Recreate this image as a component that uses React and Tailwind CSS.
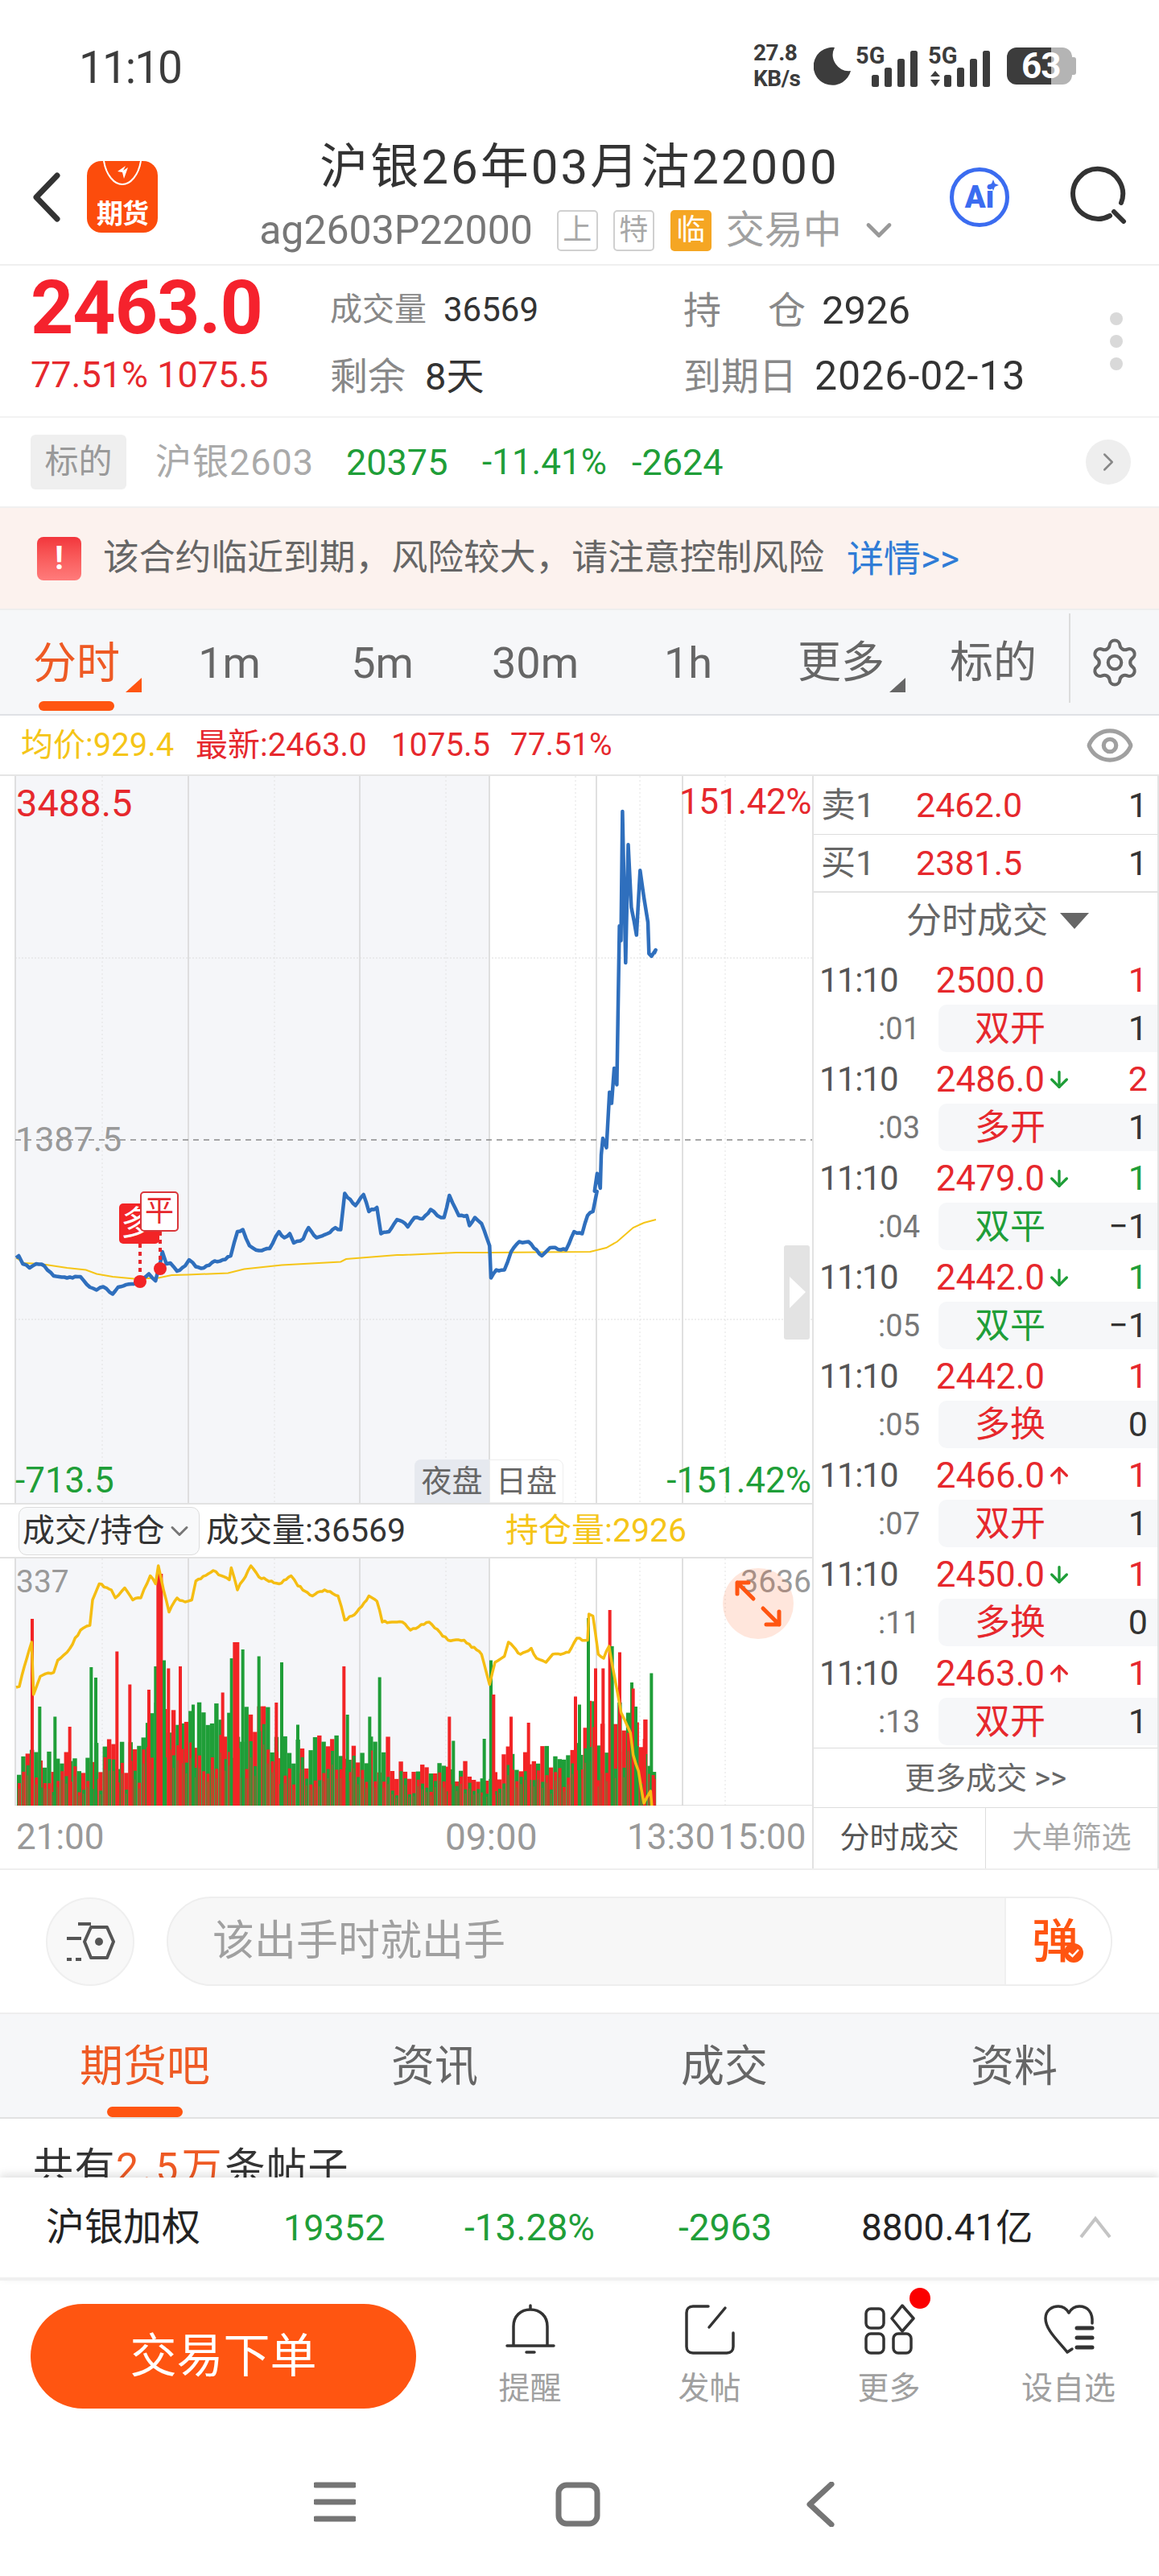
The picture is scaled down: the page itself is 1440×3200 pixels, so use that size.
import React from 'react';
import { ArrowDown, ArrowUp, ChevronRight, ChevronDown, Settings, Eye } from 'lucide-react';

const RED = '#e6282d';
const GREEN = '#1f9e38';
const YELLOW = '#f5c518';

// chart traces were read off the zoomed crops, so they are kept in crop coordinates
const fromLeft = (pts) => pts.map(([x, y]) => [x / 3, 1480 + y / 2]);
const fromRight = (pts) => pts.map(([x, y]) => [x / 3 + 500, 1480 + y / 2]);
const fromTop = (pts) => pts.map(([x, y]) => [x * 0.644, 760 + y * 0.459]);

const makeRand = (seed) => () => {
  seed = (seed * 16807) % 2147483647;
  return seed / 2147483647;
};

const roughen = (pts, amount, seed) => {
  const rand = makeRand(seed);
  const out = [];
  pts.forEach((p, i) => {
    out.push(p);
    const next = pts[i + 1];
    if (!next) return;
    const steps = Math.floor(Math.abs(next[0] - p[0]) / 3);
    for (let s = 1; s < steps; s++) {
      const t = s / steps;
      out.push([p[0] + (next[0] - p[0]) * t, p[1] + (next[1] - p[1]) * t + (rand() - 0.5) * amount]);
    }
  });
  return out;
};

const toPoints = (pts) => pts.map(([x, y]) => `${x.toFixed(1)},${y.toFixed(1)}`).join(' ');

const priceLine = roughen(
  [
    ...fromLeft([[60,165],[70,160],[85,180],[110,190],[135,180],[165,185],[200,210],[250,215],[300,212],[335,238],[360,245],[385,237],[420,255],[440,238],[490,230],[520,225],[555,205],[580,222],[600,170],[605,150],[620,180],[635,178],[660,198],[690,185],[705,170],[730,187],[760,190],[790,177],[830,170],[860,160],[885,100],[905,95],[930,135],[965,147],[1005,142],[1040,100],[1060,115],[1080,105],[1095,128],[1130,118],[1150,90],[1180,115],[1220,105],[1250,90],[1270,95],[1285,5],[1325,35],[1355,8],[1375,50],[1405,40],[1420,105],[1450,100],[1480,70]]),
    ...fromRight([[0,75],[20,88],[45,65],[75,68],[105,45],[130,60],[155,65],[175,10],[210,60],[240,60],[250,85],[270,65],[295,80],[325,135],[330,215],[350,195],[380,195],[405,150],[435,125],[470,125],[520,160],[550,140],[610,145],[640,100],[670,105],[690,60],[710,50],[725,0]]),
    ...fromTop([[1147,1568],[1152,1520],[1158,1560],[1160,1470],[1163,1425],[1170,1450],[1176,1300],[1180,1330],[1185,1235],[1190,1280],[1195,850],[1198,890],[1201,540],[1207,950],[1212,630],[1218,800],[1228,875],[1235,700],[1242,770],[1250,840],[1252,925],[1257,932],[1265,915],[1262,925]]),
  ],
  2.5,
  11
);

const avgLine = [
  ...fromLeft([[60,165],[90,178],[150,180],[250,190],[320,195],[360,205],[420,212],[500,217],[590,215],[640,208],[700,207],[850,203],[910,193],[1050,183],[1270,175],[1290,168],[1480,158]]),
  ...fromRight([[0,158],[200,152],[330,152],[700,150],[760,140],[800,125],[860,90],[900,78],[945,70]]),
];

const holdLine = roughen(
  [
    ...fromLeft([[60,1232],[72,1230],[100,1160],[118,1120],[125,1250],[150,1205],[200,1195],[215,1165],[250,1145],[300,1090],[335,1078],[345,1015],[370,975],[415,990],[430,1010],[465,985],[495,1015],[525,1010],[560,955],[580,975],[590,930],[600,960],[630,1045],[660,1010],[690,1020],[715,1015],[730,968],[795,942],[855,965],[862,935],[885,990],[935,930],[965,958],[1040,975],[1085,955],[1110,980],[1165,1005],[1210,990],[1260,1005],[1285,1065],[1330,1045],[1375,1005],[1405,1018],[1425,1070],[1480,1070]]),
    ...fromRight([[0,1070],[30,1090],[100,1070],[170,1115],[230,1115],[295,1150],[325,1225],[345,1170],[380,1155],[395,1120],[440,1150],[480,1135],[500,1160],[535,1170],[560,1150],[620,1145],[650,1110],[690,1115],[695,1050],[710,1055],[730,1150],[750,1160],[770,1130],[800,1240],[815,1295],[850,1345],[860,1400],[880,1440],[900,1520],[925,1490],[930,1530],[945,1530]]),
  ],
  3,
  23
);

const VOL_BOTTOM = 2243;

const volumeEnvelope = (x) => {
  if (x < 160) return 85;
  if (x < 340) return 130;
  if (x < 480) return 90;
  if (x < 620) return 65;
  if (x < 720) return 80;
  if (x < 800) return 135;
  return 60;
};

const baseBars = (() => {
  const rand = makeRand(97);
  const bars = [];
  for (let i = 0; i < 150; i++) {
    const x = 21 + i * 5.33;
    if (x > 815) break;
    const env = volumeEnvelope(x);
    const tall = env * (0.45 + rand() * 0.55);
    const short = tall * (0.35 + rand() * 0.5);
    const redFirst = rand() > 0.55;
    bars.push({ x, h: tall, w: 5.4, color: redFirst ? '#f22426' : '#1f9e38' });
    bars.push({ x: x + 1, h: short, w: 4, color: redFirst ? '#1f9e38' : '#f22426' });
    bars.push({ x: x + 2, h: short * 0.75, w: 1.5, color: '#8a6a30' });
  }
  return bars;
})();

// the tall bars that stand out, [crop x, crop y of top, colour, width]
const peaks = [
  ...fromLeft([[120,1062],[148,1280],[205,1305],[260,1330],[340,1182],[357,1208],[436,1143],[484,1225],[555,1238],[580,1180],[595,950],[612,1165],[628,1185],[672,1180],[720,1275],[830,1245],[863,1160],[880,1120],[905,1138],[965,1155],[1030,1270],[1050,1170],[1110,1325],[1282,1180],[1295,1300],[1378,1305],[1415,1207]]).map((p, i) => [
    ...p,
    [0,3,6,7,8,10,12,13,15,17,20,23].includes(i) ? '#f22426' : '#1f9e38',
    i === 10 || i === 17 ? 8 : 4,
  ]),
  ...fromRight([[175,1305],[190,1365],[305,1360],[330,1165],[340,1250],[405,1305],[470,1320],[645,1255],[660,1275],[693,1060],[720,1185],[748,1185],[773,1040],[782,1130],[810,1145],[855,1220],[860,1235],[870,1280],[902,1360],[928,1197],[935,1450]]).map((p, i) => [
    ...p,
    [0,4,5,6,7,10,11,12,14,16,18,20].includes(i) ? '#f22426' : '#1f9e38',
    4,
  ]),
];

const solidX = [19, 234, 447, 608, 741, 848];
const dottedX = [127, 341, 554, 715, 795, 901];

const Grid = ({ top, bottom }) => (
  <>
    <rect x="19" y={top} width="589" height={bottom - top} fill="#f5f6f9" />
    {dottedX.map((x) => (
      <line key={x} x1={x} x2={x} y1={top} y2={bottom} stroke="#e2e2e2" strokeWidth="1" strokeDasharray="2 3" />
    ))}
    {solidX.map((x) => (
      <line key={x} x1={x} x2={x} y1={top} y2={bottom} stroke="#d6d6d6" strokeWidth="1.5" />
    ))}
  </>
);

const PriceChart = () => (
  <svg className="absolute inset-0" width="1009" height="903" viewBox="0 964 1009 903">
    <Grid top={964} bottom={1867} />
    <line x1="19" x2="1009" y1="1190" y2="1190" stroke="#dedede" strokeDasharray="2 2" />
    <line x1="19" x2="1009" y1="1639" y2="1639" stroke="#dedede" strokeDasharray="2 2" />
    <line x1="19" x2="1009" y1="1416" y2="1416" stroke="#8a8a8a" strokeWidth="1.5" strokeDasharray="7 6" />
    <polyline points={toPoints(avgLine)} fill="none" stroke={YELLOW} strokeWidth="2" />
    <polyline points={toPoints(priceLine)} fill="none" stroke="#2f6fbd" strokeWidth="4.5" strokeLinejoin="round" />
    <line x1="174" x2="174" y1="1545" y2="1590" stroke="#e6282d" strokeWidth="4" strokeDasharray="5 5" />
    <line x1="199" x2="199" y1="1530" y2="1574" stroke="#e6282d" strokeWidth="4" strokeDasharray="5 5" />
    <circle cx="174" cy="1592" r="8" fill="#f22426" />
    <circle cx="199" cy="1576" r="8" fill="#f22426" />
    <rect x="974" y="1547" width="32" height="117" rx="3" fill="#e3e3e3" />
    <path d="M981 1586 L1001 1605 L981 1625 Z" fill="#fff" />
  </svg>
);

const VolumeChart = () => (
  <svg className="absolute inset-0" width="1009" height="307" viewBox="0 1936 1009 307">
    <Grid top={1936} bottom={VOL_BOTTOM} />
    <line x1="19" x2="1009" y1="2243" y2="2243" stroke="#d6d6d6" strokeWidth="1.5" />
    {baseBars.map((b, i) => (
      <rect key={i} x={b.x} y={VOL_BOTTOM - b.h} width={b.w} height={b.h} fill={b.color} />
    ))}
    {peaks.map(([x, y, color, w], i) => (
      <rect key={i} x={x - w / 2} y={y} width={w} height={VOL_BOTTOM - y} fill={color} />
    ))}
    <polyline points={toPoints(holdLine)} fill="none" stroke="#f5bd12" strokeWidth="3.5" strokeLinejoin="round" />
  </svg>
);

const StatusBar = () => (
  <div className="flex h-[164px] items-center text-[#3c3c3c]">
    <div className="ml-[98px] mt-[4px] w-[838px] text-[55px] leading-none tracking-[-2px]">11:10</div>
    <div className="flex w-[60px] flex-col text-[28px] font-bold leading-[32px] tracking-[-0.5px]">
      <span>27.8</span>
      <span>KB/s</span>
    </div>
    <svg className="ml-[15px]" width="46" height="48" viewBox="0 0 46 48">
      <path d="M26 1 A23.500 23.500 0 1 0 46 30 A20 20 0 0 1 26 1 Z" fill="#3c3c3c" />
    </svg>
    <div className="relative ml-[6px] h-[52px] w-[78px]">
      <span className="absolute left-0 top-[-1px] text-[29px] font-bold leading-none">5G</span>
      <svg className="absolute left-0 top-0" width="78" height="52" viewBox="0 0 78 52">
        <rect x="20" y="37" width="9" height="15" rx="2.500" fill="#3c3c3c" />
        <rect x="36" y="28" width="9" height="24" rx="2.500" fill="#3c3c3c" />
        <rect x="52" y="17" width="9" height="35" rx="2.500" fill="#3c3c3c" />
        <rect x="68" y="7" width="9" height="45" rx="2.500" fill="#3c3c3c" />
      </svg>
    </div>
    <div className="relative ml-[12px] h-[52px] w-[78px]">
      <span className="absolute left-0 top-[-1px] text-[29px] font-bold leading-none">5G</span>
      <svg className="absolute left-0 top-0" width="78" height="52" viewBox="0 0 78 52">
        <path d="M3 39 L9 32 L15 39 Z M3 43 L9 51 L15 43 Z" fill="#3c3c3c" />
        <rect x="20" y="37" width="9" height="15" rx="2.500" fill="#3c3c3c" />
        <rect x="36" y="28" width="9" height="24" rx="2.500" fill="#3c3c3c" />
        <rect x="52" y="17" width="9" height="35" rx="2.500" fill="#3c3c3c" />
        <rect x="68" y="7" width="9" height="45" rx="2.500" fill="#3c3c3c" />
      </svg>
    </div>
    <div className="relative ml-[20px] flex h-[46px] w-[86px] items-center">
      <div className="h-full w-[55px] rounded-l-[12px] bg-[#3c3c3c]" />
      <div className="h-full w-[26px] rounded-r-[12px] bg-[#b4b4b4]" />
      <div className="h-[22px] w-[5px] rounded-r-[3px] bg-[#b4b4b4]" />
      <span className="absolute left-[18px] top-[3px] text-[44px] font-bold leading-[40px] tracking-[-1px] text-white">63</span>
    </div>
  </div>
);

const SmallTag = ({ children }) => (
  <span className="flex h-[51px] w-[51px] items-center justify-center rounded-[5px] border-2 border-[#d0d0d0] text-[36px] leading-none text-[#a8a8a8]">
    {children}
  </span>
);

const Header = () => (
  <div className="flex h-[166px] border-b-2 border-[#efefef]">
    <div className="mt-[36px] flex h-[89px] w-[260px] items-center self-start pl-[39px]">
      <svg width="38" height="64" viewBox="0 0 38 64">
        <path d="M32 5 L6 32 L32 59" fill="none" stroke="#333" strokeWidth="7" strokeLinecap="round" strokeLinejoin="round" />
      </svg>
      <div className="relative ml-[31px] flex h-[89px] w-[88px] items-end justify-center overflow-hidden rounded-[18px] bg-[#fc4c0c] pb-[7px]">
        <svg className="absolute left-[18px] top-0" width="52" height="32" viewBox="0 0 52 32">
          <path d="M3 0 C6 18 16 29 26 29 C36 29 46 18 49 0" fill="none" stroke="#fff" strokeWidth="2" />
          <path d="M20 13 L30 6 L27 12 L33 8 L28 22 L26 14 Z" fill="#fff" />
        </svg>
        <span className="text-[33px] font-bold leading-none tracking-[-1px] text-white">期货</span>
      </div>
    </div>
    <div className="flex flex-1 flex-col items-center pt-[15px]">
      <div className="text-[60px] leading-[58px] tracking-[3px] text-[#333]">沪银26年03月沽22000</div>
      <div className="mt-[23px] flex h-[52px] items-center">
        <span className="text-[50px] leading-none text-[#777]">ag2603P22000</span>
        <span className="ml-[30px]"><SmallTag>上</SmallTag></span>
        <span className="ml-[19px]"><SmallTag>特</SmallTag></span>
        <span className="ml-[20px] flex h-[51px] w-[51px] items-center justify-center rounded-[5px] bg-[#f5a623] text-[36px] leading-none text-white">临</span>
        <span className="ml-[18px] text-[48px] leading-none text-[#a0a0a0]">交易中</span>
        <ChevronDown className="ml-[20px]" size={52} color="#999" strokeWidth={2.2} />
      </div>
    </div>
    <div className="mt-[44px] flex h-[76px] w-[260px] items-start self-start">
      <div className="relative flex h-[74px] w-[74px] items-center justify-center rounded-full border-[5px] border-[#3b6cf0]">
        <span className="text-[38px] font-black leading-none text-[#3b6cf0]">Ai</span>
        <svg className="absolute left-[42px] top-[10px]" width="14" height="14" viewBox="0 0 14 14">
          <path d="M7 0 L9 5 L14 7 L9 9 L7 14 L5 9 L0 7 L5 5 Z" fill="#3b6cf0" />
        </svg>
      </div>
      <svg className="ml-[75px] mt-[-2px]" width="72" height="72" viewBox="0 0 72 72">
        <path d="M50 62 A31 31 0 1 1 64 46" fill="none" stroke="#333" strokeWidth="6" strokeLinecap="round" />
        <path d="M55 57 L67 69" fill="none" stroke="#333" strokeWidth="6" strokeLinecap="round" />
      </svg>
    </div>
  </div>
);

const Quote = () => (
  <div className="flex h-[189px] border-b-2 border-[#f2f2f2] pt-[12px]">
    <div className="flex w-[410px] flex-col pl-[38px]">
      <div className="flex h-[80px] items-center text-[93px] font-bold leading-none tracking-[-1px] text-[#f5222d]">2463.0</div>
      <div className="flex h-[86px] items-center text-[45px] leading-none text-[#e6282d]">77.51% 1075.5</div>
    </div>
    <div className="flex w-[439px] flex-col pt-[2px]">
      <div className="flex h-[82px] items-center leading-none">
        <span className="text-[40px] text-[#888]">成交量</span>
        <span className="ml-[21px] text-[42px] text-[#333]">36569</span>
      </div>
      <div className="flex h-[82px] items-center leading-none">
        <span className="text-[47px] text-[#888]">剩余</span>
        <span className="ml-[24px] text-[47px] text-[#333]">8天</span>
      </div>
    </div>
    <div className="flex w-[530px] flex-col pt-[2px]">
      <div className="flex h-[82px] items-center leading-none">
        <span className="w-[105px] text-[47px] text-[#888]">持</span>
        <span className="w-[67px] text-[47px] text-[#888]">仓</span>
        <span className="text-[49px] text-[#333]">2926</span>
      </div>
      <div className="flex h-[82px] items-center leading-none">
        <span className="w-[163px] text-[47px] text-[#888]">到期日</span>
        <span className="text-[50px] tracking-[1px] text-[#333]">2026-02-13</span>
      </div>
    </div>
    <div className="-mt-[12px] flex flex-col justify-center gap-[12px]">
      <div className="h-[16px] w-[16px] rounded-full bg-[#d9d9d9]" />
      <div className="h-[16px] w-[16px] rounded-full bg-[#d9d9d9]" />
      <div className="h-[16px] w-[16px] rounded-full bg-[#d9d9d9]" />
    </div>
  </div>
);

const Underlying = () => (
  <div className="flex h-[112px] items-center border-b-2 border-[#f0f0f0] pl-[38px] text-[45px] leading-none">
    <span className="flex h-[68px] w-[119px] items-center justify-center rounded-[6px] bg-[#efefef] text-[42px] text-[#999]">标的</span>
    <span className="ml-[36px] w-[237px] tracking-[1px] text-[#aaa]">沪银2603</span>
    <span className="w-[169px] text-[#1f9e38]">20375</span>
    <span className="w-[186px] text-[44px] text-[#1f9e38]">-11.41%</span>
    <span className="text-[#1f9e38]">-2624</span>
    <span className="ml-auto mr-[35px] flex h-[56px] w-[56px] items-center justify-center rounded-full bg-[#eeeeee]">
      <ChevronRight size={38} color="#888" strokeWidth={1.6} />
    </span>
  </div>
);

const Warning = () => (
  <div className="flex h-[127px] items-center border-b-2 border-[#eeeeee] bg-[#fcf2ee] pl-[46px]">
    <span className="flex h-[54px] w-[55px] items-center justify-center rounded-[8px] bg-gradient-to-b from-[#f2353c] to-[#ff7b7b] text-[40px] font-bold leading-none text-white">!</span>
    <span className="ml-[27px] text-[44.800px] leading-none text-[#666]">该合约临近到期，风险较大，请注意控制风险</span>
    <span className="ml-[28px] text-[46px] leading-none text-[#2f7cd6]">详情&gt;&gt;</span>
  </div>
);

const Corner = ({ color }) => (
  <svg className="absolute bottom-[27px]" width="20" height="18" viewBox="0 0 20 18">
    <path d="M0 18 L20 0 L20 18 Z" fill={color} />
  </svg>
);

const PeriodTabs = () => (
  <div className="flex h-[131px] border-b-2 border-[#dfe1e5] bg-[#f6f7f9] text-[54px] leading-none text-[#666]">
    <div className="relative flex w-[190px] items-center justify-center pt-[4px] text-[#ee5a24]">
      分时
      <span className="absolute left-[156px] top-0 h-full"><Corner color="#ff5511" /></span>
      <span className="absolute bottom-[4px] left-[48px] h-[12px] w-[94px] rounded-full bg-[#ff5511]" />
    </div>
    <div className="flex w-[190px] items-center justify-center pt-[2px]">1m</div>
    <div className="flex w-[190px] items-center justify-center pt-[2px]">5m</div>
    <div className="flex w-[190px] items-center justify-center pt-[2px]">30m</div>
    <div className="flex w-[190px] items-center justify-center pt-[2px]">1h</div>
    <div className="relative flex w-[190px] items-center justify-center pt-[2px]">
      更多
      <span className="absolute left-[155px] top-0 h-full"><Corner color="#666" /></span>
    </div>
    <div className="flex w-[188px] items-center justify-center pt-[2px]">标的</div>
    <div className="mb-[14px] mt-[4px] border-l-2 border-[#dcdcdc]" />
    <div className="flex flex-1 items-center justify-center">
      <Settings size={66} color="#666" strokeWidth={1.5} />
    </div>
  </div>
);

const InfoRow = () => (
  <div className="flex h-[75px] items-center border-b-2 border-[#e5e5e5] pl-[26px] text-[40px] leading-none">
    <span className="w-[217px] text-[#f5c518]">均价:929.4</span>
    <span className="w-[243px] text-[#e6282d]">最新:2463.0</span>
    <span className="w-[148px] text-[#e6282d]">1075.5</span>
    <span className="text-[39px] text-[#e6282d]">77.51%</span>
    <Eye className="ml-auto mr-[30px]" size={62} color="#a0a0a0" strokeWidth={2} />
  </div>
);

const trades = [
  ['2500.0', '', RED, '1', ':01', '双开', RED, '1'],
  ['2486.0', 'down', RED, '2', ':03', '多开', RED, '1'],
  ['2479.0', 'down', GREEN, '1', ':04', '双平', GREEN, '−1'],
  ['2442.0', 'down', GREEN, '1', ':05', '双平', GREEN, '−1'],
  ['2442.0', '', RED, '1', ':05', '多换', RED, '0'],
  ['2466.0', 'up', RED, '1', ':07', '双开', RED, '1'],
  ['2450.0', 'down', RED, '1', ':11', '多换', RED, '0'],
  ['2463.0', 'up', RED, '1', ':13', '双开', RED, '1'],
];

const TradeRow = ({ trade }) => {
  const [price, dir, qtyColor, qty, sec, label, labelColor, change] = trade;
  return (
    <div className="h-[123px] pl-[7px]">
      <div className="flex h-[61px] items-center leading-none">
        <span className="w-[102px] text-[42px] tracking-[-1.500px] text-[#555]">11:10</span>
        <span className="w-[178px] text-right text-[44px] text-[#e6282d]">{price}</span>
        <span className="ml-[1px] flex w-[33px] justify-center">
          {dir === 'down' && <ArrowDown size={32} color="#1f9e38" strokeWidth={2.5} />}
          {dir === 'up' && <ArrowUp size={32} color="#e6282d" strokeWidth={2.5} />}
        </span>
        <span className="flex-1 pr-[12px] text-right" style={{ color: qtyColor }}>{qty}</span>
      </div>
      <div className="flex h-[59px] items-center leading-none">
        <span className="w-[125px] text-right text-[38px] text-[#777]">{sec}</span>
        <div className="ml-[23px] flex h-[59px] flex-1 items-center rounded-l-[10px] bg-[#f6f7f9]">
          <span className="w-[178px] text-center text-[44px]" style={{ color: labelColor }}>{label}</span>
          <span className="flex-1 pr-[12px] text-right text-[#333]">{change}</span>
        </div>
      </div>
    </div>
  );
};

const SidePanel = () => (
  <div className="flex w-[431px] flex-col border-x-2 border-[#e2e2e2] text-[43px] leading-none">
    <div className="flex h-[73px] items-center border-b border-[#dddddd] pl-[9px]">
      <span className="w-[118px] text-[#666]">卖1</span>
      <span className="w-[200px] text-[#e6282d]">2462.0</span>
      <span className="flex-1 pr-[12px] text-right text-[#333]">1</span>
    </div>
    <div className="flex h-[72px] items-center border-b-2 border-[#e2e2e2] pl-[9px]">
      <span className="w-[118px] text-[#666]">买1</span>
      <span className="w-[200px] text-[#e6282d]">2381.5</span>
      <span className="flex-1 pr-[12px] text-right text-[#333]">1</span>
    </div>
    <div className="flex h-[78px] items-center justify-center pb-[8px] pl-[30px] text-[44px] text-[#666]">
      分时成交
      <svg className="ml-[15px]" width="36" height="20" viewBox="0 0 36 20">
        <path d="M0 0 H36 L18 20 Z" fill="#666" />
      </svg>
    </div>
    {trades.map((t, i) => <TradeRow key={i} trade={t} />)}
    <div className="flex h-[74px] items-center justify-center border-t border-[#dddddd] text-[38px] text-[#666]">更多成交 &gt;&gt;</div>
    <div className="flex h-[76px] border-t border-[#dddddd] text-[37px]">
      <div className="flex w-[214px] items-center justify-center border-r border-[#dddddd] text-[#555]">分时成交</div>
      <div className="flex flex-1 items-center justify-center text-[#a8a8a8]">大单筛选</div>
    </div>
  </div>
);

const ChartColumn = () => (
  <div className="flex w-[1009px] flex-col">
    <div className="relative h-[903px] text-[44px] leading-none">
      <PriceChart />
      <span className="absolute left-[20px] top-[10px] text-[47px] text-[#e6282d]">3488.5</span>
      <span className="absolute right-[1px] top-[10px] tracking-[-0.5px] text-[#e6282d]">151.42%</span>
      <span className="absolute left-[19px] top-[430px] text-[43px] text-[#999]">1387.5</span>
      <span className="absolute bottom-[6px] left-[19px] text-[#1f9e38]">-713.5</span>
      <span className="absolute bottom-[6px] right-[1px] text-[#1f9e38]">-151.42%</span>
      <div className="absolute left-[148px] top-[531px] flex h-[50px] w-[50px] items-center overflow-hidden rounded-[5px] bg-[#f22426] pl-[2px] text-[42px] text-white">多</div>
      <div className="absolute left-[174px] top-[516px] flex h-[50px] w-[48px] items-center justify-center rounded-[5px] border-2 border-[#d9363a] bg-white text-[36px] text-[#e6282d]">平</div>
      <div className="absolute bottom-0 left-[515px] flex h-[54px] w-[185px] text-[38px] text-[#666]">
        <span className="flex w-[93px] items-center justify-center rounded-tl-[8px] bg-[#e6e9ef]">夜盘</span>
        <span className="flex w-[92px] items-center justify-center rounded-tr-[8px] border border-[#eeeeee] bg-white">日盘</span>
      </div>
    </div>
    <div className="flex h-[69px] items-center border-y-2 border-[#e2e2e2] pl-[23px] text-[40px] leading-none">
      <div className="flex h-[60px] w-[225px] items-center rounded-[10px] border border-[#dcdcdc] bg-[#f8f9fa] pl-[4px] text-[#333]">
        成交/持仓
        <ChevronDown size={36} color="#777" strokeWidth={2} />
      </div>
      <span className="ml-[8px] w-[372px] text-[41px] text-[#333]">成交量:36569</span>
      <span className="text-[41px] text-[#f5c518]">持仓量:2926</span>
    </div>
    <div className="relative h-[307px] text-[39px] leading-none">
      <VolumeChart />
      <span className="absolute left-[20px] top-[10px] text-[#999]">337</span>
      <span className="absolute right-[1px] top-[10px] text-[#999]">3636</span>
      <div className="absolute left-[898px] top-[12px] flex h-[88px] w-[88px] items-center justify-center rounded-full bg-[#ff5511]/15">
        <svg width="60" height="60" viewBox="0 0 60 60">
          <path d="M4 18 V4 H18 M4 4 L24 24 M36 36 L56 56 M56 40 V56 H40" fill="none" stroke="#ff5511" strokeWidth="5" strokeLinecap="round" strokeLinejoin="round" />
        </svg>
      </div>
    </div>
    <div className="flex h-[77px] items-center pl-[20px] text-[44px] leading-none text-[#999]">
      <span className="w-[533px]">21:00</span>
      <span className="w-[226px] text-[46px]">09:00</span>
      <span className="w-[113px]">13:30</span>
      <span>15:00</span>
    </div>
  </div>
);

const InputRow = () => (
  <div className="flex h-[181px] items-center border-y-2 border-[#eeeeee] pl-[57px]">
    <div className="flex h-[110px] w-[110px] items-center justify-center rounded-full border-2 border-[#efefef] bg-[#f8f8f8]">
      <svg width="62" height="54" viewBox="0 0 62 54">
        <path d="M16 5 H32 M2 23 H20 M2 49 H8 M13 49 H20" fill="none" stroke="#555" strokeWidth="4" />
        <path d="M32 9 H52 L60 27 L52 47 H32 L24 27 Z" fill="none" stroke="#555" strokeWidth="4" strokeLinejoin="round" />
        <circle cx="42" cy="27" r="5" fill="#555" />
      </svg>
    </div>
    <div className="ml-[40px] flex h-[111px] w-[1175px] items-center overflow-hidden rounded-full border-2 border-[#eeeeee] bg-[#f7f7f7] pl-[55px]">
      <span className="flex-1 text-[52px] leading-none text-[#a0a0a0]">该出手时就出手</span>
      <div className="relative flex h-full w-[132px] items-center border-l-2 border-[#f0f0f0] bg-white pl-[32px]">
        <span className="text-[58px] font-medium leading-none text-[#ff5511]">弹</span>
        <svg className="absolute left-[72px] top-[56px]" width="24" height="24" viewBox="0 0 24 24">
          <circle cx="12" cy="12" r="12" fill="#ff5511" />
          <path d="M6 12 L10.500 16 L18 8" fill="none" stroke="#fff" strokeWidth="2.500" />
        </svg>
      </div>
    </div>
  </div>
);

const SectionTabs = () => (
  <div className="flex h-[130px] border-b-2 border-[#e2e2e2] bg-[#f6f7f9] text-[54px] leading-none text-[#666]">
    <div className="relative flex w-[360px] items-center justify-center pt-[4px] text-[#ee5a24]">
      期货吧
      <span className="absolute bottom-[0px] left-[133px] h-[13px] w-[94px] rounded-full bg-[#ff5511]" />
    </div>
    <div className="flex w-[360px] items-center justify-center pt-[4px]">资讯</div>
    <div className="flex w-[360px] items-center justify-center pt-[4px]">成交</div>
    <div className="flex w-[360px] items-center justify-center pt-[4px]">资料</div>
  </div>
);

const PostCount = () => (
  <div className="h-[73px] overflow-hidden pl-[41px] pt-[36px] text-[50px] leading-none tracking-[1.500px] text-[#333]">
    共有<span className="tracking-[4px] text-[#ee5a24]">2.5万</span>条帖子
  </div>
);

const SummaryBar = () => (
  <div className="relative flex h-[128px] items-center border-b-4 border-[#f0f0f0] bg-white pl-[57px] text-[46px] leading-none shadow-[0_-4px_10px_rgba(0,0,0,0.12)]">
    <span className="w-[295px] text-[48px] text-[#222]">沪银加权</span>
    <span className="w-[225px] text-[45px] text-[#1f9e38]">19352</span>
    <span className="w-[266px] text-[#1f9e38]">-13.28%</span>
    <span className="w-[227px] text-[#1f9e38]">-2963</span>
    <span className="w-[270px] text-[#222]">8800.41亿</span>
    <svg width="42" height="30" viewBox="0 0 42 30">
      <path d="M3 27 L21 4 L39 27" fill="none" stroke="#c4c4c4" strokeWidth="4" />
    </svg>
  </div>
);

const ICON_STROKE = { fill: 'none', stroke: '#333', strokeWidth: 3.5, strokeLinecap: 'round', strokeLinejoin: 'round' };

const NavItem = ({ label, dot, children }) => (
  <div className="relative flex w-[223px] flex-col items-center">
    <svg width="64" height="64" viewBox="0 0 64 64">{children}</svg>
    <span className="mt-[22px] text-[39px] leading-none text-[#a0a0a0]">{label}</span>
    {dot && <span className="absolute left-[137px] top-[-20px] h-[26px] w-[26px] rounded-full bg-[#fb0000]" />}
  </div>
);

const ActionRow = () => (
  <div className="flex h-[218px] items-start pl-[38px] pt-[29px]">
    <div className="flex h-[130px] w-[479px] items-center justify-center rounded-full bg-[#ff5511] text-[58px] leading-none text-white">交易下单</div>
    <div className="ml-[30px] flex">
      <NavItem label="提醒">
        <path d="M3 52 H61 M11 52 V28 C11 15 20 7 32 7 C44 7 53 15 53 28 V52 M32 2 V7 M27 60 H37" {...ICON_STROKE} />
      </NavItem>
      <NavItem label="发帖">
        <path d="M30 3 H11 C6 3 3 6 3 11 V53 C3 58 6 61 11 61 H53 C58 61 61 58 61 53 V36 M31 29 L51 5" {...ICON_STROKE} />
      </NavItem>
      <NavItem label="更多" dot>
        <rect x="3" y="6" width="22" height="24" rx="6" {...ICON_STROKE} />
        <rect x="3" y="37" width="22" height="24" rx="6" {...ICON_STROKE} />
        <rect x="37" y="37" width="22" height="24" rx="6" {...ICON_STROKE} />
        <path d="M48 2 L62 18 L48 34 L35 18 Z" {...ICON_STROKE} />
      </NavItem>
      <NavItem label="设自选">
        <path d="M30 60 C18 45 3 32 3 18 C3 8 11 3 19 3 C25 3 29 6 32 11 C35 6 39 3 45 3 C55 3 62 10 61 24 M30 60 L36 56" {...ICON_STROKE} />
        <path d="M42 30 H61 M42 42 H61 M42 54 H61" {...ICON_STROKE} strokeWidth="5" />
      </NavItem>
    </div>
  </div>
);

const SystemNav = () => (
  <div className="flex flex-1 items-start justify-center pt-[32px]">
    <svg className="ml-[-14px]" width="52" height="50" viewBox="0 0 52 50">
      <path d="M2 4 H50 M2 25 H50 M2 46 H50" stroke="#757575" strokeWidth="7" strokeLinecap="round" />
    </svg>
    <svg className="ml-[248px]" width="56" height="56" viewBox="0 0 56 56">
      <rect x="4" y="4" width="48" height="48" rx="10" fill="none" stroke="#757575" strokeWidth="7" />
    </svg>
    <svg className="ml-[255px]" width="36" height="56" viewBox="0 0 36 56">
      <path d="M32 3 L5 28 L32 53" fill="none" stroke="#757575" strokeWidth="7" strokeLinecap="round" strokeLinejoin="round" />
    </svg>
  </div>
);

export default function App() {
  return (
    <div className="relative flex h-[3200px] w-[1440px] flex-col overflow-hidden bg-white font-['Roboto','Noto_Sans_CJK_SC',sans-serif]">
      <StatusBar />
      <Header />
      <Quote />
      <Underlying />
      <Warning />
      <PeriodTabs />
      <InfoRow />
      <div className="flex">
        <ChartColumn />
        <SidePanel />
      </div>
      <InputRow />
      <SectionTabs />
      <PostCount />
      <SummaryBar />
      <ActionRow />
      <SystemNav />
    </div>
  );
}
